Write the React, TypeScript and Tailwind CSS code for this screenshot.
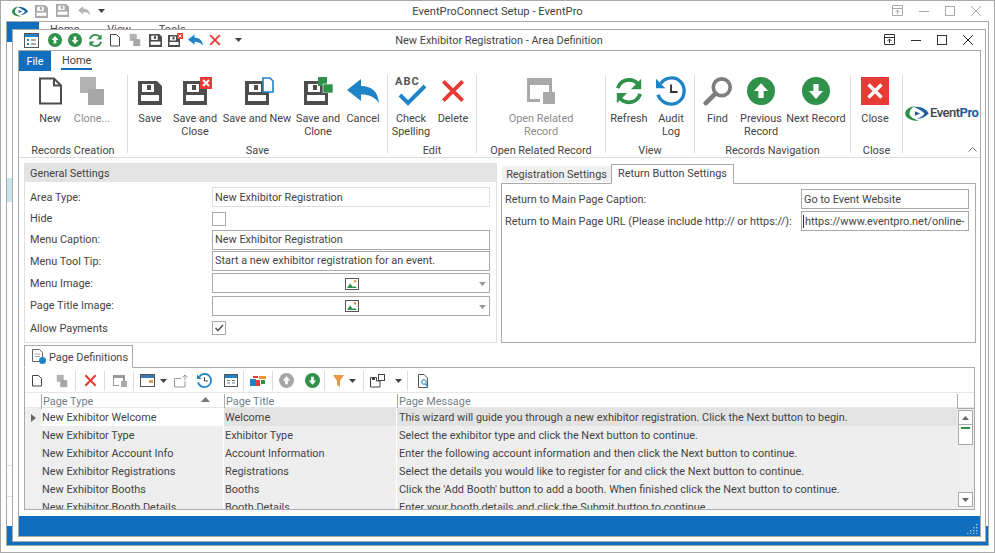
import React from 'react';

type IconProps = { size?: number };

const Floppy = ({ size = 24, color = '#4d4d4d' }: IconProps & { color?: string }) => (
  <svg width={size} height={size} viewBox="0 0 24 24" className="shrink-0">
    <path d="M0 0H19L24 5V24H0Z" fill={color} />
    <rect x="4" y="3" width="12" height="8" fill="white" />
    <rect x="9" y="4" width="4" height="5" fill={color} />
    <rect x="3" y="14" width="18" height="6" fill="white" />
  </svg>
);

const NewDoc = ({ size = 32 }: IconProps) => (
  <svg width={size} height={size} viewBox="0 0 32 32" className="shrink-0">
    <path d="M6 3.5H20L27 10.5V28.5H6Z M20 3.5V10.5H27" fill="white" stroke="#4d4d4d" strokeWidth="2" />
  </svg>
);

const Clone = ({ size = 32 }: IconProps) => (
  <svg width={size} height={size} viewBox="0 0 32 32" className="shrink-0">
    <rect x="4" y="2" width="16" height="16" fill="#b3b3b3" />
    <rect x="12" y="14" width="16" height="16" fill="#a6a6a6" />
  </svg>
);

const CrossBadge = ({ size = 12 }: IconProps) => (
  <svg width={size} height={size} viewBox="0 0 12 12" className="absolute top-0 right-0">
    <rect width="12" height="12" fill="#e83b35" />
    <path d="M3 3L9 9M9 3L3 9" stroke="white" strokeWidth="2" />
  </svg>
);

const SaveClose = () => (
  <div className="relative w-[29px] h-[28px] ml-[5px]">
    <div className="absolute left-0 bottom-0"><Floppy /></div>
    <CrossBadge />
  </div>
);

const SaveNew = () => (
  <div className="relative w-[29px] h-[28px] ml-[4px]">
    <div className="absolute left-0 bottom-0"><Floppy /></div>
    <svg width="12" height="16" viewBox="0 0 12 16" className="absolute top-0 right-0">
      <path d="M1 1H8L11 4V15H1Z" fill="white" stroke="#1f83c8" strokeWidth="1.6" />
    </svg>
  </div>
);

const SaveClone = () => (
  <div className="relative w-[29px] h-[28px]">
    <div className="absolute left-0 bottom-0"><Floppy /></div>
    <svg width="15" height="16" viewBox="0 0 15 16" className="absolute top-0 right-0">
      <rect x="0" y="0" width="9" height="9" fill="#2f914a" />
      <rect x="5" y="7" width="10" height="9" fill="#2f914a" stroke="white" strokeWidth="0.6" />
    </svg>
  </div>
);

const Cancel = ({ size = 32 }: IconProps) => (
  <svg width={size} height={size} viewBox="0 0 32 32" className="shrink-0">
    <path d="M0 14L14 3V10C24 10 31 15 32 27C28 21 22 18.5 14 18.5V25Z" fill="#1f83c8" />
  </svg>
);

const RedX = ({ size = 32 }: IconProps) => (
  <svg width={size} height={size} viewBox="0 0 32 32" className="shrink-0">
    <path d="M5 5L27 27M27 5L5 27" stroke="#e83b35" strokeWidth="4.4" />
  </svg>
);

const CheckSpelling = () => (
  <div className="relative w-[32px] h-[32px]">
    <span className="absolute left-0 top-0 text-[11px] font-bold text-[#555] tracking-[1px] leading-[14px]">ABC</span>
    <svg width="32" height="32" viewBox="0 0 32 32" className="absolute left-0 top-[1px]">
      <path d="M5 19L13 27L30 10" fill="none" stroke="#1f83c8" strokeWidth="4" />
    </svg>
  </div>
);

const OpenRelated = () => (
  <svg width="30" height="28" viewBox="0 0 30 28" className="shrink-0">
    <path d="M1 1H26V15H23V8H4V22H14V25H1Z" fill="#a9a9a9" />
    <rect x="17" y="15" width="12" height="12" fill="#a9a9a9" />
  </svg>
);

const Refresh = ({ size = 32 }: IconProps) => (
  <svg width={size} height={size} viewBox="0 0 32 32" className="shrink-0">
    <path d="M4 13C6 7 11 4 16 4C21 4 24 6 26 9" fill="none" stroke="#2f914a" strokeWidth="4" />
    <path d="M29 3V14H18Z" fill="#2f914a" />
    <path d="M28 19C26 25 21 28 16 28C11 28 8 26 6 23" fill="none" stroke="#2f914a" strokeWidth="4" />
    <path d="M3 29V18H14Z" fill="#2f914a" />
  </svg>
);

const AuditLog = ({ size = 32 }: IconProps) => (
  <svg width={size} height={size} viewBox="0 0 32 32" className="shrink-0">
    <path d="M5 8C8 4 12 2 17 2C24 2 30 8 30 16C30 24 24 30 16 30C9 30 4 25 2 20" fill="none" stroke="#1f83c8" strokeWidth="3.6" />
    <path d="M0 3V13H10Z" fill="#1f83c8" />
    <path d="M16 9V17H23" fill="none" stroke="#333" strokeWidth="2" />
  </svg>
);

const Find = () => (
  <svg width="30" height="30" viewBox="0 0 32 32" className="shrink-0">
    <circle cx="20" cy="12" r="9" fill="none" stroke="#7d7d7d" strokeWidth="4" />
    <path d="M13 19L3 29" stroke="#7d7d7d" strokeWidth="5" strokeLinecap="round" />
  </svg>
);

const ArrowCircle = ({ size = 32, dir, color = '#2f914a' }: IconProps & { dir: 'up' | 'down'; color?: string }) => (
  <svg width={size} height={size} viewBox="0 0 32 32" className="shrink-0">
    <circle cx="16" cy="16" r="16" fill={color} />
    {dir === 'up' ? (
      <path d="M16 7L24 16H19V24H13V16H8Z" fill="white" />
    ) : (
      <path d="M16 25L24 16H19V8H13V16H8Z" fill="white" />
    )}
  </svg>
);

const CloseBox = () => (
  <svg width="28" height="28" viewBox="0 0 28 28" className="shrink-0">
    <rect width="28" height="28" fill="#e83b35" />
    <path d="M7.5 7.5L20.5 20.5M20.5 7.5L7.5 20.5" stroke="white" strokeWidth="3.4" />
  </svg>
);

const Swoosh = ({ w = 24, h = 15 }: { w?: number; h?: number }) => (
  <svg width={w} height={h} viewBox="0 0 22 14" className="shrink-0">
    <path d="M9 0C3 1 0 4 0 7C0 11 5 14 13 14C8 12 4 10 4 7C4 4 6 2 9 0Z" fill="#2f8f46" />
    <path d="M8 1C14 0 20 3 22 7C19 10 15 12 11 12C15 10 17 9 18 7C16 5 13 3 8 1Z" fill="#1d5f9e" />
    <path d="M9 5L14 7L9 9Z" fill="#1d5f9e" />
  </svg>
);

const Caret = ({ color = '#444' }: { color?: string }) => (
  <svg width="7" height="4" viewBox="0 0 7 4" className="shrink-0">
    <path d="M0 0H7L3.5 4Z" fill={color} />
  </svg>
);

const PictureIcon = () => (
  <svg width="14" height="12" viewBox="0 0 14 12">
    <rect x="0.5" y="0.5" width="13" height="11" fill="white" stroke="#555" />
    <circle cx="10" cy="3.2" r="1.3" fill="#e8963c" />
    <path d="M2 10L5 5.5L8 9L9.5 8L12 10Z" fill="#2f914a" />
  </svg>
);

const WindowButtons = ({ color }: { color: string }) => (
  <div className="flex items-center">
    <svg width="27" height="14" viewBox="0 0 27 14" className="shrink-0">
      <path d="M2.5 1.5H12.5V11.5H2.5Z M2.5 4.5H12.5 M7.5 10V6 M5.5 8L7.5 6L9.5 8" fill="none" stroke={color} />
    </svg>
    <svg width="26" height="14" viewBox="0 0 26 14" className="shrink-0">
      <path d="M2 7.5H12" stroke={color} />
    </svg>
    <svg width="26" height="14" viewBox="0 0 26 14" className="shrink-0">
      <rect x="2.5" y="2.5" width="9" height="9" fill="none" stroke={color} />
    </svg>
    <svg width="14" height="14" viewBox="0 0 14 14" className="shrink-0">
      <path d="M2 2L12 12M12 2L2 12" stroke={color} />
    </svg>
  </div>
);

const RibbonButton = ({ w, label, icon, muted }: { w: number; label: React.ReactNode; icon: React.ReactNode; muted?: boolean }) => (
  <div className={`flex flex-col items-center shrink-0 ${muted ? 'text-[#8c8c8c]' : ''}`} style={{ width: w }}>
    <div className="h-[32px] flex items-center justify-center">{icon}</div>
    <div className="mt-[5px] text-center leading-[13px] whitespace-nowrap">{label}</div>
  </div>
);

const RibbonGroup = ({ w, title, children }: { w: number; title: string; children: React.ReactNode }) => (
  <div className="flex flex-col h-[78px] border-r border-[#dcdcdc] shrink-0" style={{ width: w }}>
    <div className="h-[66px] flex justify-center">{children}</div>
    <div className="h-[12px] text-center leading-[20px] whitespace-nowrap">{title}</div>
  </div>
);

const Ribbon = () => (
  <div className="flex h-[87px] pt-[4px] border-b border-[#dcdcdc]">
    <RibbonGroup w={109} title="Records Creation">
      <RibbonButton w={42} label="New" icon={<NewDoc />} />
      <RibbonButton w={42} label="Clone..." muted icon={<Clone />} />
      <div className="w-[4px]" />
    </RibbonGroup>
    <RibbonGroup w={260} title="Save">
      <div className="flex w-full">
        <RibbonButton w={44} label="Save" icon={<div className="mt-[4px]"><Floppy /></div>} />
        <RibbonButton w={46} label={<>Save and<br />Close</>} icon={<SaveClose />} />
        <RibbonButton w={78} label="Save and New" icon={<SaveNew />} />
        <RibbonButton w={44} label={<>Save and<br />Clone</>} icon={<SaveClone />} />
        <RibbonButton w={46} label="Cancel" icon={<div className="mt-[2px]"><Cancel /></div>} />
      </div>
    </RibbonGroup>
    <RibbonGroup w={89} title="Edit">
      <RibbonButton w={42} label={<>Check<br />Spelling</>} icon={<CheckSpelling />} />
      <RibbonButton w={42} label="Delete" icon={<RedX size={28} />} />
    </RibbonGroup>
    <RibbonGroup w={129} title="Open Related Record">
      <RibbonButton w={80} muted label={<>Open Related<br />Record</>} icon={<OpenRelated />} />
    </RibbonGroup>
    <RibbonGroup w={89} title="View">
      <RibbonButton w={42} label="Refresh" icon={<Refresh size={30} />} />
      <RibbonButton w={42} label={<>Audit<br />Log</>} icon={<AuditLog size={30} />} />
    </RibbonGroup>
    <RibbonGroup w={156} title="Records Navigation">
      <RibbonButton w={43} label="Find" icon={<Find />} />
      <RibbonButton w={44} label={<>Previous<br />Record</>} icon={<ArrowCircle size={28} dir="up" />} />
      <RibbonButton w={66} label="Next Record" icon={<ArrowCircle size={28} dir="down" />} />
    </RibbonGroup>
    <RibbonGroup w={52} title="Close">
      <RibbonButton w={44} label="Close" icon={<CloseBox />} />
      <div className="w-[3px]" />
    </RibbonGroup>
    <div className="flex-1 relative">
      <div className="flex items-center gap-[1px] pl-[2px] mt-[30px]">
        <Swoosh />
        <span className="text-[13px] font-medium tracking-[-0.5px] text-[#444] leading-[16px]">
          Event<span className="text-[#1d5f9e] font-bold">Pro</span>
        </span>
      </div>
      <svg width="9" height="5" viewBox="0 0 9 5" className="absolute right-[3px] bottom-[5px]">
        <path d="M0.5 4.5L4.5 0.5L8.5 4.5" fill="none" stroke="#777" />
      </svg>
    </div>
  </div>
);

const fieldClass = 'w-[278px] h-[20px] border border-[#a9a9a9] pl-[2px] pt-[1px] flex items-center bg-white whitespace-nowrap';

const ImageField = () => (
  <div className={`${fieldClass} relative justify-center`}>
    <PictureIcon />
    <div className="absolute right-[3px] top-[8px]"><Caret color="#999" /></div>
  </div>
);

const Row = ({ h, label, children }: { h: number; label: string; children: React.ReactNode }) => (
  <div className="flex items-center" style={{ height: h }}>
    <div className="w-[182px] shrink-0 pt-[2px]">{label}</div>
    {children}
  </div>
);

const Check = ({ checked }: { checked?: boolean }) => (
  <div className="w-[14px] h-[14px] border border-[#a9a9a9] flex items-center justify-center">
    {checked && (
      <svg width="10" height="8" viewBox="0 0 10 8">
        <path d="M1.5 4L4 6.5L9 1" fill="none" stroke="#444" strokeWidth="1.3" />
      </svg>
    )}
  </div>
);

const GeneralSettings = () => (
  <div className="w-[473px] h-[180px] border border-[#e0e0e0] shrink-0">
    <div className="h-[18px] bg-[#e3e3e3] pl-[5px] leading-[19px]">General Settings</div>
    <div className="pl-[5px] pt-[4px]">
      <Row h={22} label="Area Type:">
        <div className={`${fieldClass} !border-[#e0e0e0] !pt-[2px]`}>New Exhibitor Registration</div>
      </Row>
      <Row h={21} label="Hide"><Check /></Row>
      <Row h={21} label="Menu Caption:"><div className={fieldClass}>New Exhibitor Registration</div></Row>
      <Row h={22} label="Menu Tool Tip:"><div className={fieldClass}>Start a new exhibitor registration for an event.</div></Row>
      <Row h={22} label="Menu Image:"><ImageField /></Row>
      <Row h={23} label="Page Title Image:"><ImageField /></Row>
      <Row h={22} label="Allow Payments"><Check checked /></Row>
    </div>
  </div>
);

const ReturnSettings = () => (
  <div className="w-[475px] h-[180px] shrink-0 flex flex-col ml-[4px]">
    <div className="flex items-end h-[20px] pl-[1px] relative z-10">
      <div className="w-[109px] h-[16px] bg-[#f0f0f0] text-center leading-[17px] mb-[1px] whitespace-nowrap">Registration Settings</div>
      <div className="w-[123px] h-[20px] -mb-[1px] border border-[#a9a9a9] border-b-white bg-white text-center leading-[17px] whitespace-nowrap">Return Button Settings</div>
    </div>
    <div className="flex-1 border border-[#a9a9a9] pl-[3px] pt-[4px]">
      <div className="flex items-center h-[21px]">
        <div className="w-[296px] shrink-0 whitespace-nowrap pt-[3px]">Return to Main Page Caption:</div>
        <div className="w-[168px] h-[20px] border border-[#a9a9a9] pl-[2px] whitespace-nowrap overflow-hidden leading-[19px]">Go to Event Website</div>
      </div>
      <div className="flex items-center h-[21px] mt-[1px]">
        <div className="w-[296px] shrink-0 whitespace-nowrap pt-[3px]">Return to Main Page URL (Please include http:// or https://):</div>
        <div className="w-[168px] h-[20px] border border-[#a9a9a9] pl-[1px] whitespace-nowrap overflow-hidden leading-[19px]">
          <span className="border-l border-[#333] pl-[1px]">https://www.eventpro.net/online-</span>
        </div>
      </div>
    </div>
  </div>
);

const Sep = () => <div className="w-px h-[20px] bg-[#dcdcdc] shrink-0" />;

const Slot = ({ w = 24, children }: { w?: number; children?: React.ReactNode }) => (
  <div className="flex items-center justify-center gap-[5px] shrink-0" style={{ width: w }}>{children}</div>
);

const GridToolbar = () => (
  <div className="flex items-center h-[24px] pt-[1px]">
    <Slot><svg width="12" height="13" viewBox="0 0 12 13"><path d="M1.5 1.5H7.5L10.5 4.5V12H1.5Z" fill="white" stroke="#444" /></svg></Slot>
    <Slot w={26}><Clone size={14} /></Slot>
    <Sep />
    <Slot w={28}><RedX size={15} /></Slot>
    <Sep />
    <Slot w={28}>
      <svg width="15" height="13" viewBox="0 0 15 13"><path d="M1 1H13V7H11V4H2V11H7V12H1Z" fill="#999" /><rect x="9" y="7" width="6" height="6" fill="#aaa" /></svg>
    </Slot>
    <Sep />
    <Slot w={38}>
      <svg width="15" height="13" viewBox="0 0 15 13"><rect x="0.5" y="0.5" width="14" height="12" fill="white" stroke="#555" /><rect x="1" y="1" width="13" height="3" fill="#3a78b8" /><rect x="9" y="6" width="4" height="3" fill="#d99a5b" /></svg>
      <Caret />
    </Slot>
    <Slot w={18}>
      <svg width="16" height="14" viewBox="0 0 16 14" className="shrink-0"><path d="M1.5 4.5H8M1.5 4.5V13H12V7" fill="none" stroke="#999" /><path d="M12 6V1M9.5 3.5L12 1L14.5 3.5" fill="none" stroke="#999" /></svg>
    </Slot>
    <Slot w={28}><AuditLog size={15} /></Slot>
    <Slot w={25}>
      <svg width="14" height="13" viewBox="0 0 14 13"><rect x="0.5" y="0.5" width="13" height="12" fill="white" stroke="#555" /><rect x="1" y="1" width="12" height="3" fill="#1f83c8" /><path d="M3 6.5H6M3 9H6M8 6.5H11M8 9H11" stroke="#777" /></svg>
    </Slot>
    <Sep />
    <Slot w={28}>
      <svg width="16" height="11" viewBox="0 0 16 11"><path d="M0 4H6V11H0Z" fill="#1f83c8" /><path d="M6 5H10V11H6Z" fill="#e83b35" /><path d="M3 1H8V3H3Z" fill="#e83b35" /><path d="M9 1H16V4H9Z" fill="#e8963c" /><path d="M11 5H15V9H11Z" fill="#2f914a" /></svg>
    </Slot>
    <Sep />
    <Slot w={27}><ArrowCircle size={15} dir="up" color="#a6a6a6" /></Slot>
    <Slot w={24}><ArrowCircle size={15} dir="down" /></Slot>
    <Sep />
    <Slot w={38}>
      <svg width="11" height="12" viewBox="0 0 11 12"><path d="M0 0H11L7 6V12L4 10V6Z" fill="#e89a45" /></svg>
      <Caret />
    </Slot>
    <Sep />
    <Slot w={43}>
      <svg width="15" height="14" viewBox="0 0 15 14"><path d="M0.5 3.5H6.5V7H10M0.5 3.5V13H10V7" fill="none" stroke="#444" /><rect x="2" y="3" width="3" height="3" fill="#444" /><rect x="8.5" y="0.5" width="6" height="6" fill="white" stroke="#444" /></svg>
      <span className="w-0" />
      <Caret />
    </Slot>
    <Sep />
    <Slot w={30}>
      <svg width="13" height="14" viewBox="0 0 13 14"><path d="M1.5 0.5H7L10.5 4V13.5H1.5Z" fill="white" stroke="#555" /><circle cx="7" cy="8" r="2.3" fill="white" stroke="#1f83c8" /><path d="M8.5 10L11 12.5" stroke="#1f83c8" strokeWidth="1.4" /></svg>
    </Slot>
  </div>
);

const pageRows = [
  ['New Exhibitor Welcome', 'Welcome', 'This wizard will guide you through a new exhibitor registration. Click the Next button to begin.'],
  ['New Exhibitor Type', 'Exhibitor Type', 'Select the exhibitor type and click the Next button to continue.'],
  ['New Exhibitor Account Info', 'Account Information', 'Enter the following account information and then click the Next button to continue.'],
  ['New Exhibitor Registrations', 'Registrations', 'Select the details you would like to register for and click the Next button to continue.'],
  ['New Exhibitor Booths', 'Booths', "Click the 'Add Booth' button to add a booth. When finished click the Next button to continue."],
  ['New Exhibitor Booth Details', 'Booth Details', 'Enter your booth details and click the Submit button to continue.'],
];

const gridCols = 'grid grid-cols-[16px_183px_173px_561px]';

const PageGrid = () => (
  <div className="relative flex-1 min-h-0 overflow-hidden">
    <div className={`${gridCols} h-[16px] border-b border-[#a9a9a9] text-[#6f7f86] leading-[15px] border-t border-[#e6e6e6]`}>
      <div />
      <div className="relative border-l border-[#a9a9a9] pl-[1px] my-[1px] leading-[15px]">
        Page Type
        <svg width="9" height="5" viewBox="0 0 9 5" className="absolute right-[14px] top-[3px]"><path d="M0 5L4.5 0L9 5Z" fill="#777" /></svg>
      </div>
      <div className="border-l border-[#a9a9a9] pl-[1px] my-[1px] leading-[15px]">Page Title</div>
      <div className="border-l border-r border-[#a9a9a9] pl-[1px] my-[1px] leading-[15px]">Page Message</div>
    </div>
    {pageRows.map((r, i) => (
      <div key={r[0]} className={`${gridCols} h-[18px] leading-[18px] whitespace-nowrap`}>
        <div className="bg-[#efefef] flex items-center justify-center">
          {i === 0 && <svg width="5" height="8" viewBox="0 0 5 8"><path d="M0 0L5 4L0 8Z" fill="#666" /></svg>}
        </div>
        <div className={`pl-[1px] pt-[1px] border-b border-r border-white ${i === 0 ? 'bg-white' : 'bg-[#eeeeee]'}`}>{r[0]}</div>
        <div className={`pl-[1px] pt-[1px] border-b border-r border-white ${i === 0 ? 'bg-[#e3e3e3]' : 'bg-[#eeeeee]'}`}>{r[1]}</div>
        <div className={`pl-[2px] pt-[1px] border-b border-white ${i === 0 ? 'bg-[#e3e3e3]' : 'bg-[#eeeeee]'}`}>{r[2]}</div>
      </div>
    ))}
    <div className="absolute right-0 top-[16px] bottom-0 w-[17px] bg-[#efefef] border-t border-[#a9a9a9] flex flex-col items-center pt-[1px]">
      <div className="w-[15px] h-[15px] border border-[#a9a9a9] bg-white flex items-center justify-center">
        <svg width="7" height="4" viewBox="0 0 7 4"><path d="M0 4H7L3.5 0Z" fill="#666" /></svg>
      </div>
      <div className="w-[15px] h-[20px] border border-t-0 border-[#a9a9a9] bg-white flex justify-center pt-[2px]">
        <div className="w-[9px] h-[2px] bg-[#2f914a]" />
      </div>
      <div className="flex-1" />
      <div className="w-[15px] h-[15px] border border-[#a9a9a9] bg-white flex items-center justify-center mb-[2px]">
        <Caret color="#666" />
      </div>
    </div>
  </div>
);

const PageDefinitions = () => (
  <div className="h-[165px] flex flex-col mt-[2px] shrink-0">
    <div className="h-[23px] w-[109px] -mb-px relative z-10 border border-[#a9a9a9] border-b-white bg-white flex items-center gap-[3px] pl-[7px]">
      <svg width="14" height="15" viewBox="0 0 14 15" className="shrink-0">
        <path d="M0.5 0.5H7.5L10.5 3.5V12.5H0.5Z" fill="white" stroke="#666" />
        <path d="M2.5 5H8M2.5 7.5H8" stroke="#aaa" />
        <circle cx="10.5" cy="11.5" r="3.5" fill="#1f83c8" />
      </svg>
      <span className="whitespace-nowrap pt-[3px]">Page Definitions</span>
    </div>
    <div className="flex-1 min-h-0 border border-[#a9a9a9] flex flex-col">
      <GridToolbar />
      <PageGrid />
    </div>
  </div>
);

export default function App() {
  return (
    <div className="w-[995px] h-[553px] overflow-hidden bg-white border border-[#a9a9a9] flex flex-col font-['Roboto',sans-serif] text-[10.9px] text-[#444]">
      {/* outer window title */}
      <div className="h-[20px] shrink-0 relative flex items-center pr-[11px]">
        <div className="flex items-center pl-[11px]">
          <div className="w-[23px]"><Swoosh w={16} h={11} /></div>
          <div className="w-[21px]"><Floppy size={13} color="#a9a9a9" /></div>
          <div className="relative w-[20px] h-[14px]"><Floppy size={13} color="#a9a9a9" /></div>
          <div className="w-[22px]"><svg width="16" height="12" viewBox="0 0 32 32"><path d="M0 14L14 3V10C24 10 31 15 32 27C28 21 22 18.5 14 18.5V25Z" fill="#b3b3b3" /></svg></div>
          <Caret />
        </div>
        <div className="flex-1 text-center whitespace-nowrap text-[11.2px] pt-[2px]">EventProConnect Setup - EventPro</div>
        <WindowButtons color="#a9a9a9" />
      </div>

      {/* window behind the editor */}
      <div className="relative flex-1 mx-[5px] mb-[6px] border border-[#a9a9a9] flex flex-col overflow-hidden">
        <div className="flex h-[20px] shrink-0">
          <div className="w-[32px] bg-[#106ebe]" />
          <div className="flex gap-[28px] pl-[11px] pt-[1px] leading-[13px]"><span>Home</span><span>View</span><span>Tools</span></div>
        </div>
        <div className="flex-1 flex flex-col">
          <div className="w-[5px] h-[24px] mt-[136px] bg-[#c5e5ea]" />
          <div className="w-[5px] h-px mt-[263px] bg-[#e0e0e0]" />
          <div className="w-[5px] h-px mt-[30px] bg-[#e0e0e0]" />
        </div>
        <div className="h-[19px] shrink-0 bg-[#106ebe]" />

        {/* editor window */}
        <div className="absolute left-[5px] top-[7px] w-[974px] h-[513px] bg-white border border-[#a9a9a9] flex flex-col">
          <div className="h-[20px] shrink-0 flex items-center pr-[10px]">
            <div className="flex items-center pl-[5px]">
              <Slot w={27}>
                <svg width="15" height="15" viewBox="0 0 15 15"><rect x="0.5" y="0.5" width="14" height="14" fill="white" stroke="#555" /><rect x="1" y="1" width="13" height="3" fill="#1f83c8" /><rect x="3" y="6" width="2" height="2" fill="#1f83c8" /><rect x="3" y="10" width="2" height="2" fill="#1f83c8" /><path d="M7 7H12M7 11H12" stroke="#555" /></svg>
              </Slot>
              <Slot w={20}><ArrowCircle size={14} dir="up" /></Slot>
              <Slot w={20}><ArrowCircle size={14} dir="down" /></Slot>
              <Slot w={20}><Refresh size={15} /></Slot>
              <Slot w={20}><svg width="12" height="14" viewBox="0 0 12 14"><path d="M1.5 1.5H7.5L10.5 4.5V13H1.5Z" fill="white" stroke="#444" /></svg></Slot>
              <Slot w={20}><Clone size={14} /></Slot>
              <Slot w={20}><Floppy size={13} /></Slot>
              <Slot w={20}>
                <div className="relative w-[15px] h-[14px]">
                  <div className="absolute left-0 bottom-0"><Floppy size={12} /></div>
                  <CrossBadge size={6} />
                </div>
              </Slot>
              <Slot w={20}><Cancel size={15} /></Slot>
              <Slot w={20}><RedX size={14} /></Slot>
              <Slot w={26}><Caret /></Slot>
            </div>
            <div className="flex-1 text-center pr-[135px] whitespace-nowrap text-[10.9px] pt-[2px]">New Exhibitor Registration - Area Definition</div>
            <WindowButtons color="#333" />
          </div>

          <div className="flex-1 min-h-0 ml-[5px] mr-[4px] mb-[4px] border border-[#a9a9a9] flex flex-col">
            <div className="h-[20px] shrink-0 flex">
              <div className="w-[32px] bg-[#106ebe] text-white text-center leading-[22px]">File</div>
              <div className="ml-[10px] h-[19px] border-b-2 border-[#106ebe] leading-[20px] px-[1px]">Home</div>
            </div>
            <Ribbon />
            <div className="flex-1 min-h-0 flex flex-col px-[5px] pt-[5px]">
              <div className="flex shrink-0">
                <GeneralSettings />
                <ReturnSettings />
              </div>
              <PageDefinitions />
            </div>
            <div className="h-[20px] shrink-0 bg-[#106ebe] relative">
              <svg width="11" height="11" viewBox="0 0 11 11" className="absolute right-[2px] bottom-[2px]">
                <path d="M9 1H10.5V2.5H9ZM6 4H7.5V5.5H6ZM9 4H10.5V5.5H9ZM3 7H4.5V8.5H3ZM6 7H7.5V8.5H6ZM9 7H10.5V8.5H9ZM0 10H1.5V11H0ZM3 10H4.5V11H3ZM6 10H7.5V11H6ZM9 10H10.5V11H9Z" fill="#9cc3e4" />
              </svg>
            </div>
          </div>
        </div>
      </div>
    </div>
  );
}
